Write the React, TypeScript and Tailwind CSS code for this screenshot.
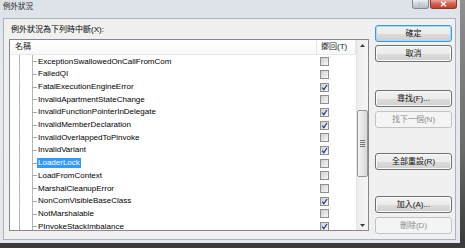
import React from "react";

const rows: [string, boolean][] = [
  ["ExceptionSwallowedOnCallFromCom", false],
  ["FailedQI", false],
  ["FatalExecutionEngineError", true],
  ["InvalidApartmentStateChange", false],
  ["InvalidFunctionPointerInDelegate", true],
  ["InvalidMemberDeclaration", true],
  ["InvalidOverlappedToPinvoke", false],
  ["InvalidVariant", true],
  ["LoaderLock", false],
  ["LoadFromContext", false],
  ["MarshalCleanupError", false],
  ["NonComVisibleBaseClass", true],
  ["NotMarshalable", false],
  ["PInvokeStackImbalance", true],
];

function TreeLines() {
  return (
    <svg width="27" height="12.7" viewBox="0 0 27 12.7" className="shrink-0 block">
      <line x1="9.5" y1="0" x2="9.5" y2="12.7" stroke="#b4b4b4" strokeWidth="1" />
      <line x1="22.5" y1="0" x2="22.5" y2="12.7" stroke="#b4b4b4" strokeWidth="1" />
      <line x1="22.5" y1="6.5" x2="27" y2="6.5" stroke="#a8a8a8" strokeWidth="1" />
    </svg>
  );
}

function Check({ on }: { on: boolean }) {
  return (
    <div className="w-[9px] h-[9px] border border-[#8f8f8f] bg-[#f4f4f4] flex items-center justify-center">
      <div className="w-[7px] h-[7px] bg-[linear-gradient(135deg,#cfcfcf,#f7f7f7)] flex items-center justify-center">
        {on && (
          <svg width="7" height="7" viewBox="0 0 7 7" className="block">
            <path d="M1.2 3.6 L2.8 5.6 L6 1" fill="none" stroke="#2b3f8f" strokeWidth="1.3" />
          </svg>
        )}
      </div>
    </div>
  );
}

function Btn({
  label,
  cls,
  def,
  disabled,
}: {
  label: string;
  cls: string;
  def?: boolean;
  disabled?: boolean;
}) {
  let look =
    "border-[#707070] bg-[linear-gradient(to_bottom,#f2f2f2_0%,#ebebeb_50%,#dddddd_51%,#cfcfcf_100%)] shadow-[inset_0_0_0_1px_#fafafa] text-[#111]";
  if (def)
    look =
      "border-[#3c9ad8] bg-[linear-gradient(to_bottom,#f2f2f2_0%,#ebebeb_50%,#dddddd_51%,#cfcfcf_100%)] shadow-[inset_0_0_0_1px_#9edcf8] text-[#111]";
  if (disabled) look = "border-[#c0c4c7] bg-[#f4f4f4] text-[#8d8d8d]";
  return (
    <div
      className={`w-[77px] h-[17px] rounded-[3px] border flex items-center justify-center text-[8px] leading-[10px] ${look} ${cls}`}
    >
      {label}
    </div>
  );
}

export default function App() {
  return (
    <div className="w-[465px] h-[248px] overflow-hidden bg-[linear-gradient(to_bottom,#8f8f8f,#6a6a6a_60%,#3a3a3a_98%)] font-['Liberation_Sans','Noto_Sans_CJK_TC',sans-serif] text-black">
      <div className="w-[460px] h-[243px] bg-[linear-gradient(to_bottom,#dde2e8,#e6eaef_30%,#e4e8ed)] flex flex-col">
        <div className="h-[18px] flex items-start shrink-0">
          <span className="pl-[3px] pt-[2px] text-[7.5px] leading-[10px] text-[#1a1a1a]">例外狀況</span>
          <div className="ml-auto mr-[3px] flex gap-[1px]">
            <div className="w-[17px] h-[9px] rounded-b-[3px] border border-t-0 border-[#7f8a98] bg-[linear-gradient(to_bottom,#eef1f5,#c9d0d9_55%,#b7c0cb)] flex items-center justify-center text-[7px] leading-[7px] font-bold text-white [text-shadow:0_0_1px_#34404f]">
              ?
            </div>
            <div className="w-[27px] h-[9px] rounded-b-[3px] border border-t-0 border-[#8a352a] bg-[linear-gradient(to_bottom,#e9a99c,#d0604e_50%,#c2412d)] flex items-center justify-center">
              <svg width="7" height="6" viewBox="0 0 7 6" className="block">
                <path d="M1 0.8 L6 5.2 M6 0.8 L1 5.2" stroke="#ffffff" strokeWidth="1.4" />
              </svg>
            </div>
          </div>
        </div>
        <div className="ml-[3px] w-[453px] h-[222px] border border-[#aab3bd] bg-[#f0f0f0] flex shrink-0">
          <div className="pl-[5px] pt-[5px] flex flex-col">
            <div className="h-[11px] leading-[11px] text-[8px] pl-[2px] whitespace-nowrap">例外狀況為下列時中斷(X):</div>
            <div className="mt-[4px] w-[360px] h-[192px] border border-[#828790] bg-white flex overflow-hidden">
              <div className="flex-1 flex flex-col overflow-hidden">
                <div className="h-[15.3px] shrink-0 flex border-b border-[#e8e8e8] bg-[linear-gradient(to_bottom,#ffffff,#f7f8f9)] text-[8px] leading-[10px] text-[#1e1e1e]">
                  <div className="w-[307px] border-r border-[#e5e5e5] pl-[5px] flex items-center">名稱</div>
                  <div className="flex-1 pl-[4px] flex items-center border-r border-[#e5e5e5]">擲回(T)</div>
                </div>
                <div className="flex-1 overflow-hidden flex flex-col">
                  {rows.map(([name, on], i) => (
                    <div key={i} className="h-[12.7px] shrink-0 flex items-center text-[8px] leading-[10px]">
                      <div className="w-[307px] flex items-center">
                        <TreeLines />
                        {name === "LoaderLock" ? (
                          <span className="px-[1px] h-[10px] leading-[10px] bg-[#3399ff] text-white">{name}</span>
                        ) : (
                          <span className="px-[1px] whitespace-nowrap">{name}</span>
                        )}
                      </div>
                      <div className="pl-[3px] flex items-center">
                        <Check on={on} />
                      </div>
                    </div>
                  ))}
                </div>
              </div>
              <div className="w-[12px] h-full flex flex-col items-center bg-[linear-gradient(to_right,#ededed,#f6f6f6)] border-l border-[#e6e6e6] shrink-0">
                <div className="h-[10px] flex items-center justify-center">
                  <svg width="5" height="3" viewBox="0 0 5 3" className="block">
                    <polygon points="2.5,0 5,3 0,3" fill="#404040" />
                  </svg>
                </div>
                <div className="mt-[60px] w-[11px] h-[67px] rounded-[2px] border border-[#979797] bg-[linear-gradient(to_right,#f4f4f4,#e6e6e6_50%,#d6d6d6)] flex flex-col items-center justify-center gap-[1px]">
                  <div className="w-[5px] h-[1px] bg-[#707070]" />
                  <div className="w-[5px] h-[1px] bg-[#707070]" />
                  <div className="w-[5px] h-[1px] bg-[#707070]" />
                  <div className="w-[5px] h-[1px] bg-[#707070]" />
                </div>
                <div className="mt-auto h-[9px] flex items-center justify-center">
                  <svg width="5" height="3" viewBox="0 0 5 3" className="block">
                    <polygon points="0,0 5,0 2.5,3" fill="#404040" />
                  </svg>
                </div>
              </div>
            </div>
          </div>
          <div className="ml-[6px] pt-[6px] flex flex-col">
            <Btn label="確定" cls="" def />
            <Btn label="取消" cls="mt-[3px]" />
            <Btn label="尋找(F)..." cls="mt-[28px]" />
            <Btn label="找下一個(N)" cls="mt-[4px]" disabled />
            <Btn label="全部重設(R)" cls="mt-[25px]" />
            <Btn label="加入(A)..." cls="mt-[26px]" />
            <Btn label="刪除(D)" cls="mt-[4px]" disabled />
          </div>
        </div>
      </div>
    </div>
  );
}
